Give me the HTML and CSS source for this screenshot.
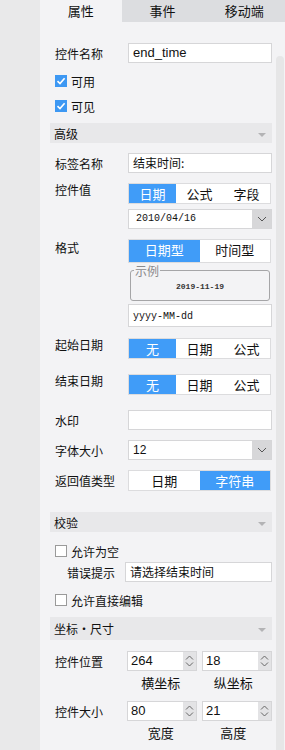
FILE: index.html
```html
<!DOCTYPE html>
<html lang="zh-CN">
<head>
    <meta charset="UTF-8">
    <title>控件属性</title>
    <link rel="stylesheet" href="styles.css">
</head>
<body>
<div class="app">
    <div class="side"></div>
    <div class="panel">
        <div class="tabs">
            <div class="tab active">属性</div>
            <div class="tab">事件</div>
            <div class="tab">移动端</div>
        </div>
        <div class="body">
            <div class="content">
                <div class="row first">
                    <span class="label">控件名称</span>
                    <div class="input sans">end_time</div>
                </div>
                <div class="row check-row c1">
                    <span class="check on"><svg viewBox="0 0 12 12" width="12" height="12"><path d="M2.5 6.2 L5 8.6 L9.6 3.2" fill="none" stroke="#fff" stroke-width="1.6"/></svg></span>
                    <span>可用</span>
                </div>
                <div class="row check-row c2">
                    <span class="check on"><svg viewBox="0 0 12 12" width="12" height="12"><path d="M2.5 6.2 L5 8.6 L9.6 3.2" fill="none" stroke="#fff" stroke-width="1.6"/></svg></span>
                    <span>可见</span>
                </div>

                <div class="section s-adv">高级<i class="tri"></i></div>

                <div class="row">
                    <span class="label">标签名称</span>
                    <div class="input">结束时间:</div>
                </div>

                <div class="field">
                    <span class="label">控件值</span>
                    <div class="field-body">
                        <div class="seg">
                            <span class="on">日期</span><span>公式</span><span>字段</span>
                        </div>
                        <div class="combo gap5">
                            <span class="combo-text mono">2010/04/16</span>
                            <span class="combo-btn"><svg viewBox="0 0 10 6" width="10" height="6"><path d="M1 1 L5 5 L9 1" fill="none" stroke="#555" stroke-width="1"/></svg></span>
                        </div>
                    </div>
                </div>

                <div class="field">
                    <span class="label lab-fmt">格式</span>
                    <div class="field-body">
                        <div class="seg">
                            <span class="on">日期型</span><span>时间型</span>
                        </div>
                        <fieldset class="sample">
                            <legend>示例</legend>
                            <div class="sample-text">2019-11-19</div>
                        </fieldset>
                        <div class="input tall mono">yyyy-MM-dd</div>
                    </div>
                </div>

                <div class="field f-start">
                    <span class="label">起始日期</span>
                    <div class="field-body">
                        <div class="seg">
                            <span class="on">无</span><span>日期</span><span>公式</span>
                        </div>
                    </div>
                </div>

                <div class="field f-wide">
                    <span class="label">结束日期</span>
                    <div class="field-body">
                        <div class="seg">
                            <span class="on">无</span><span>日期</span><span>公式</span>
                        </div>
                    </div>
                </div>

                <div class="row r-wide">
                    <span class="label">水印</span>
                    <div class="input"></div>
                </div>

                <div class="row">
                    <span class="label">字体大小</span>
                    <div class="combo">
                        <span class="combo-text sans">12</span>
                        <span class="combo-btn"><svg viewBox="0 0 10 6" width="10" height="6"><path d="M1 1 L5 5 L9 1" fill="none" stroke="#555" stroke-width="1"/></svg></span>
                    </div>
                </div>

                <div class="row r-seg">
                    <span class="label">返回值类型</span>
                    <div class="seg">
                        <span>日期</span><span class="on">字符串</span>
                    </div>
                </div>

                <div class="section s-check">校验<i class="tri"></i></div>

                <div class="row check-row c3">
                    <span class="check"></span>
                    <span>允许为空</span>
                </div>
                <div class="row err-row">
                    <span class="label err-label">错误提示</span>
                    <div class="input">请选择结束时间</div>
                </div>
                <div class="row check-row c4">
                    <span class="check"></span>
                    <span>允许直接编辑</span>
                </div>

                <div class="section s-pos">坐标・尺寸<i class="tri"></i></div>

                <div class="row spin-row sp1">
                    <span class="label lab-spin">控件位置</span>
                    <div class="spin">
                        <span class="spin-val">264</span>
                        <span class="spin-btn">
                            <svg viewBox="0 0 9 5" width="9" height="5"><path d="M1 4.5 L4.5 1 L8 4.5" fill="none" stroke="#666" stroke-width="1"/></svg>
                            <svg viewBox="0 0 9 5" width="9" height="5"><path d="M1 0.5 L4.5 4 L8 0.5" fill="none" stroke="#666" stroke-width="1"/></svg>
                        </span>
                    </div>
                    <div class="spin">
                        <span class="spin-val">18</span>
                        <span class="spin-btn">
                            <svg viewBox="0 0 9 5" width="9" height="5"><path d="M1 4.5 L4.5 1 L8 4.5" fill="none" stroke="#666" stroke-width="1"/></svg>
                            <svg viewBox="0 0 9 5" width="9" height="5"><path d="M1 0.5 L4.5 4 L8 0.5" fill="none" stroke="#666" stroke-width="1"/></svg>
                        </span>
                    </div>
                </div>
                <div class="caption-row">
                    <span>横坐标</span><span>纵坐标</span>
                </div>

                <div class="row spin-row sp2">
                    <span class="label lab-spin">控件大小</span>
                    <div class="spin">
                        <span class="spin-val">80</span>
                        <span class="spin-btn">
                            <svg viewBox="0 0 9 5" width="9" height="5"><path d="M1 4.5 L4.5 1 L8 4.5" fill="none" stroke="#666" stroke-width="1"/></svg>
                            <svg viewBox="0 0 9 5" width="9" height="5"><path d="M1 0.5 L4.5 4 L8 0.5" fill="none" stroke="#666" stroke-width="1"/></svg>
                        </span>
                    </div>
                    <div class="spin">
                        <span class="spin-val">21</span>
                        <span class="spin-btn">
                            <svg viewBox="0 0 9 5" width="9" height="5"><path d="M1 4.5 L4.5 1 L8 4.5" fill="none" stroke="#666" stroke-width="1"/></svg>
                            <svg viewBox="0 0 9 5" width="9" height="5"><path d="M1 0.5 L4.5 4 L8 0.5" fill="none" stroke="#666" stroke-width="1"/></svg>
                        </span>
                    </div>
                </div>
                <div class="caption-row">
                    <span>宽度</span><span>高度</span>
                </div>
            </div>
            <div class="scroll"><div class="thumb"></div></div>
        </div>
    </div>
</div>
</body>
</html>
```

FILE: styles.css
```css
* {
    box-sizing: border-box;
}
body {
    margin: 0;
    font-family: "Noto Sans CJK SC", "Liberation Sans", sans-serif;
    font-size: 12px;
    color: #111;
}
.app {
    display: flex;
    width: 285px;
    height: 750px;
    overflow: hidden;
}
.side {
    width: 40px;
    background: #e9e9ea;
}
.panel {
    flex: 1;
    display: flex;
    flex-direction: column;
    background: #f3f3f5;
}
.tabs {
    display: flex;
    height: 22px;
}
.tab {
    flex: 1;
    text-align: center;
    line-height: 22px;
    font-size: 13px;
    background: #dcdde0;
}
.tab.active {
    background: #f3f3f5;
}
.body {
    flex: 1;
    display: flex;
}
.content {
    width: 236px;
    padding: 0 4px 0 10px;
}
.scroll {
    width: 9px;
    display: flex;
    flex-direction: column;
    padding-top: 34px;
}
.thumb {
    flex: 1;
    width: 8px;
    background: #e6e6e7;
    border-radius: 4px 4px 0 0;
}

/* rows */
.row {
    display: flex;
    align-items: center;
    height: 20px;
    margin: 10px 0 0 5px;
}
.row.first { margin-top: 21px; }
.c1 { margin-top: 8px; }
.c2 { margin-top: 5px; }
.c3 { margin-top: 9px; }
.c4 { margin-top: 8px; }
.r-wide { margin-top: 15px; }
.r-seg { height: 21px; }
.label {
    width: 73px;
    flex-shrink: 0;
}
.input {
    flex: 1;
    height: 20px;
    background: #fff;
    border: 1px solid #d6d6d8;
    padding-left: 4px;
    line-height: 18px;
    font-size: 12px;
    white-space: nowrap;
    overflow: hidden;
}
.input.tall {
    height: 26px;
    line-height: 24px;
    margin-top: 3px;
}
.sans {
    font-family: "Liberation Sans", "Noto Sans CJK SC", sans-serif;
    font-size: 13px;
}
.mono {
    font-family: "Liberation Mono", monospace;
    font-size: 10px;
}

/* checkbox */
.check-row .check {
    width: 12px;
    height: 12px;
    margin-right: 4px;
    border: 1px solid #9a9a9a;
    background: #fff;
    display: flex;
}
.check.on {
    border: none;
    background: #3d98f3;
}

/* section header */
.section {
    height: 20px;
    margin-top: 7px;
    padding-left: 4px;
    background: #e8e8ea;
    display: flex;
    align-items: center;
    justify-content: space-between;
    padding-right: 6px;
}
.s-check { margin-top: 21px; }
.s-pos { height: 23px; }
.tri {
    width: 0;
    height: 0;
    border-left: 4px solid transparent;
    border-right: 4px solid transparent;
    border-top: 4px solid #b3b3b5;
    margin-top: 3px;
}

/* grouped fields */
.field {
    display: flex;
    margin: 10px 0 0 5px;
}
.field .label {
    line-height: 14px;
}
.field .lab-fmt {
    margin-top: 2px;
}
.f-start { margin-top: 11px; }
.f-wide { margin-top: 15px; }
.field-body {
    flex: 1;
    display: flex;
    flex-direction: column;
}
.seg {
    flex: 1;
    display: flex;
    height: 21px;
    background: #fff;
    border: 1px solid #dcdcde;
    margin-right: 1px;
}
.seg span {
    flex: 1;
    text-align: center;
    line-height: 19px;
    font-size: 13px;
}
.seg .on {
    background: #409cf8;
    color: #fff;
}
.combo {
    flex: 1;
    display: flex;
    height: 20px;
    background: #fff;
    border: 1px solid #d6d6d8;
}
.gap5 {
    flex: none;
    margin-top: 5px;
}
.combo-text {
    flex: 1;
    padding-left: 7px;
    line-height: 18px;
}
.combo .sans {
    padding-left: 4px;
    font-size: 12px;
}
.combo-btn {
    width: 19px;
    background: #d7d7d9;
    display: flex;
    align-items: center;
    justify-content: center;
}

/* sample box */
.sample {
    margin: 2px 2px 0 2px;
    padding: 0;
    height: 36px;
    border: 1px solid #a5a5a7;
    border-radius: 3px;
}
.sample legend {
    margin-left: 3px;
    padding: 0 1px;
    font-size: 12px;
    line-height: 12px;
    color: #8a8a8c;
}
.sample-text {
    text-align: center;
    font-family: "Liberation Mono", monospace;
    font-size: 8px;
    font-weight: bold;
    margin-top: 5px;
    color: #333;
}

/* error row */
.err-row {
    margin: 1px 0 0 17px;
}
.err-label {
    width: 58px;
}

/* spinners */
.sp1 { margin-top: 11px; }
.sp2 { margin-top: 8px; }
.lab-spin {
    width: 72px;
}
.spin {
    width: 70px;
    height: 20px;
    display: flex;
    background: #fff;
    border: 1px solid #d6d6d8;
    margin-right: 5px;
}
.spin:last-child {
    margin-right: 0;
}
.spin-val {
    flex: 1;
    padding-left: 3px;
    line-height: 18px;
    font-family: "Liberation Sans", sans-serif;
    font-size: 13px;
}
.spin-btn {
    width: 13px;
    background: #e3e3e5;
    display: flex;
    flex-direction: column;
    align-items: center;
    justify-content: space-around;
    padding: 2px 0;
}
.caption-row {
    display: flex;
    margin: 2px 0 0 77px;
    height: 20px;
    line-height: 20px;
    font-size: 13px;
}
.caption-row span {
    width: 70px;
    margin-right: 5px;
    text-align: center;
}
```
